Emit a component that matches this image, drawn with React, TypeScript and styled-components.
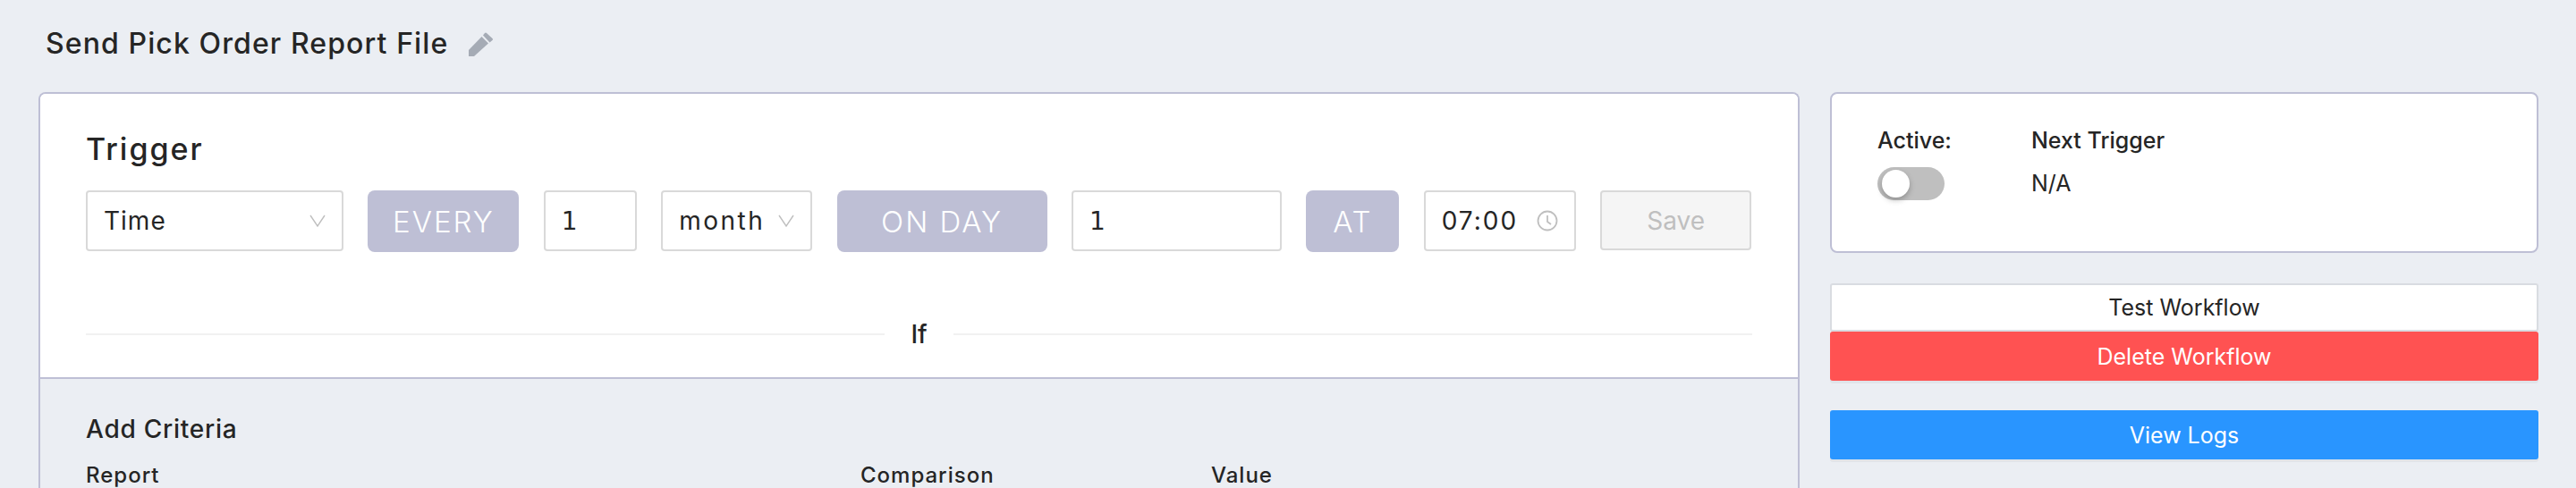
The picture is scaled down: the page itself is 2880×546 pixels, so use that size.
import React from "react";
import styled, { createGlobalStyle } from "styled-components";

const Global = createGlobalStyle`
  html, body { margin: 0; padding: 0; background: #ebeef3; }
  body { font-family: Inter, "Liberation Sans", sans-serif; color: #252525; overflow: hidden; }
  * { box-sizing: border-box; }
`;

const Page = styled.div`
  width: 2880px;
  height: 546px;
  overflow: hidden;
  padding: 0 42px 0 43px;
`;
const TitleRow = styled.div`
  height: 103px;
  padding: 31px 0 0 8px;
  display: flex;
  align-items: flex-start;
  gap: 23px;
`;
const Title = styled.h1`
  margin: 0;
  font-size: 32px;
  line-height: 36px;
  font-weight: 500;
  letter-spacing: 1.1px;
`;
const PencilIcon = styled.svg`
  margin-top: 5px;
  flex: none;
`;
const Columns = styled.div`
  display: grid;
  grid-template-columns: 1969px 792px;
  gap: 34px;
  align-items: start;
`;
const MainCard = styled.section`
  border: 2px solid #bebfd5;
  border-bottom: none;
  border-radius: 8px 8px 0 0;
  overflow: hidden;
  background: #fff;
  height: 443px;
`;
const TriggerArea = styled.div`
  background: #fff;
  height: 319px;
  padding: 40px 51px 0;
  border-bottom: 2px solid #bebfd5;
`;
const H2 = styled.h2`
  margin: 0 0 24px;
  font-size: 34px;
  line-height: 44px;
  font-weight: 500;
  letter-spacing: 2px;
`;
const Row = styled.div`
  display: flex;
  gap: 27.4px;
  align-items: flex-start;
`;
const Field = styled.div<{ $w: number; $ls?: number; $digit?: boolean }>`
  width: ${(p) => p.$w}px;
  height: 68px;
  flex: none;
  border: 2px solid #d9d9d9;
  border-radius: 4px;
  background: #fff;
  padding: 0 18px;
  display: flex;
  align-items: center;
  justify-content: space-between;
  font-size: 28px;
  font-family: ${(p) => (p.$digit ? '"DejaVu Sans", sans-serif' : "inherit")};
  letter-spacing: ${(p) => p.$ls ?? 0}px;
`;
const Tag = styled.div<{ $w: number }>`
  width: ${(p) => p.$w}px;
  height: 69px;
  flex: none;
  border-radius: 8px;
  background: #bebfd5;
  color: #fff;
  display: flex;
  align-items: center;
  justify-content: center;
  font-size: 33px;
  font-weight: 300;
  letter-spacing: 2px;
`;
const SaveButton = styled.button`
  width: 169px;
  height: 67px;
  flex: none;
  border: 2px solid #d9d9d9;
  border-radius: 4px;
  background: #f5f5f5;
  color: #bfbfbf;
  font: 400 28px Inter, "Liberation Sans", sans-serif;
`;
const Divider = styled.div`
  display: flex;
  align-items: center;
  gap: 29px;
  margin-top: 74px;
  font-size: 28px;
  line-height: 36px;
  font-weight: 500;
  &::before, &::after {
    content: "";
    flex: 1;
    height: 2px;
    background: #f1f1f1;
  }
`;
const CriteriaArea = styled.div`
  background: #ebeef3;
  height: 122px;
  padding: 37px 51px 0;
`;
const H3 = styled.h3`
  margin: 0 0 21px;
  font-size: 28px;
  line-height: 38px;
  font-weight: 500;
  letter-spacing: 0.75px;
`;
const Labels = styled.div`
  display: grid;
  grid-template-columns: 866px 392px 1fr;
  font-size: 24px;
  line-height: 24px;
  font-weight: 500;
  letter-spacing: 1px;
`;
const Side = styled.aside`
  display: flex;
  flex-direction: column;
`;
const StatusCard = styled.div`
  height: 180px;
  background: #fff;
  border: 2px solid #bebfd5;
  border-radius: 8px;
  padding: 36px 51px;
  display: flex;
  gap: 89px;
  margin-bottom: 34px;
`;
const StatusCol = styled.div`
  display: flex;
  flex-direction: column;
  gap: 14px;
  font-size: 25px;
  line-height: 32px;
  font-weight: 500;
`;
const Value = styled.div`
  font-weight: 400;
  line-height: 36px;
`;
const Switch = styled.div`
  width: 75px;
  height: 37px;
  border-radius: 19px;
  background: #bfbfbf;
  padding: 3px 5px;
`;
const Knob = styled.div`
  width: 31px;
  height: 31px;
  border-radius: 50%;
  background: #fff;
  box-shadow: 0 3px 6px rgba(0,0,0,.25);
`;
const ActionButton = styled.button<{ $bg: string; $fg: string; $gap?: number; $outlined?: boolean }>`
  height: ${(p) => (p.$outlined ? 54 : 55)}px;
  width: 100%;
  border: ${(p) => (p.$outlined ? "2px solid #d9dce1" : "none")};
  border-radius: 3px;
  background: ${(p) => p.$bg};
  color: ${(p) => p.$fg};
  margin-bottom: ${(p) => p.$gap ?? 0}px;
  box-shadow: ${(p) => (p.$outlined ? "none" : "0 3px 0 rgba(0,0,0,.04)")};
  font: 400 25px Inter, "Liberation Sans", sans-serif;
`;

const Pencil = () => (
  <PencilIcon width="27" height="27" viewBox="0 0 27 27">
    <path d="M0 27v-7L14.500 5 22 12.500 6 27z" fill="#a5abb5" />
    <path d="M16 3.500l2-2.500q1-1 2 0l6.500 6q1 1 0 2L23.500 11.500z" fill="#a5abb5" />
  </PencilIcon>
);
const Chevron = () => (
  <svg width="18" height="14" viewBox="0 0 18 14" fill="none" stroke="#bfbfbf" strokeWidth="1.400">
    <path d="M1 1l8 12 8-12" />
  </svg>
);
const Clock = () => (
  <svg width="24" height="24" viewBox="0 0 24 24" fill="none" stroke="#bfbfbf" strokeWidth="1.800">
    <circle cx="12" cy="12" r="10.500" />
    <path d="M12 6v7l4 3" />
  </svg>
);

export default function App() {
  return (
    <Page>
      <Global />
      <TitleRow>
        <Title>Send Pick Order Report File</Title>
        <Pencil />
      </TitleRow>
      <Columns>
        <MainCard>
          <TriggerArea>
            <H2>Trigger</H2>
            <Row>
              <Field $w={288} $ls={1}>Time<Chevron /></Field>
              <Tag $w={169}>EVERY</Tag>
              <Field $w={104} $digit>1</Field>
              <Field $w={169} $ls={2.500}>month<Chevron /></Field>
              <Tag $w={235}>ON DAY</Tag>
              <Field $w={235} $digit>1</Field>
              <Tag $w={104}>AT</Tag>
              <Field $w={170} $ls={2}>07:00<Clock /></Field>
              <SaveButton>Save</SaveButton>
            </Row>
            <Divider>If</Divider>
          </TriggerArea>
          <CriteriaArea>
            <H3>Add Criteria</H3>
            <Labels>
              <span>Report</span>
              <span>Comparison</span>
              <span>Value</span>
            </Labels>
          </CriteriaArea>
        </MainCard>
        <Side>
          <StatusCard>
            <StatusCol>
              Active:
              <Switch><Knob /></Switch>
            </StatusCol>
            <StatusCol>
              Next Trigger
              <Value>N/A</Value>
            </StatusCol>
          </StatusCard>
          <ActionButton $bg="#fff" $fg="#252525" $outlined>Test Workflow</ActionButton>
          <ActionButton $bg="#ff5252" $fg="#fff" $gap={33}>Delete Workflow</ActionButton>
          <ActionButton $bg="#2995ff" $fg="#fff">View Logs</ActionButton>
        </Side>
      </Columns>
    </Page>
  );
}
